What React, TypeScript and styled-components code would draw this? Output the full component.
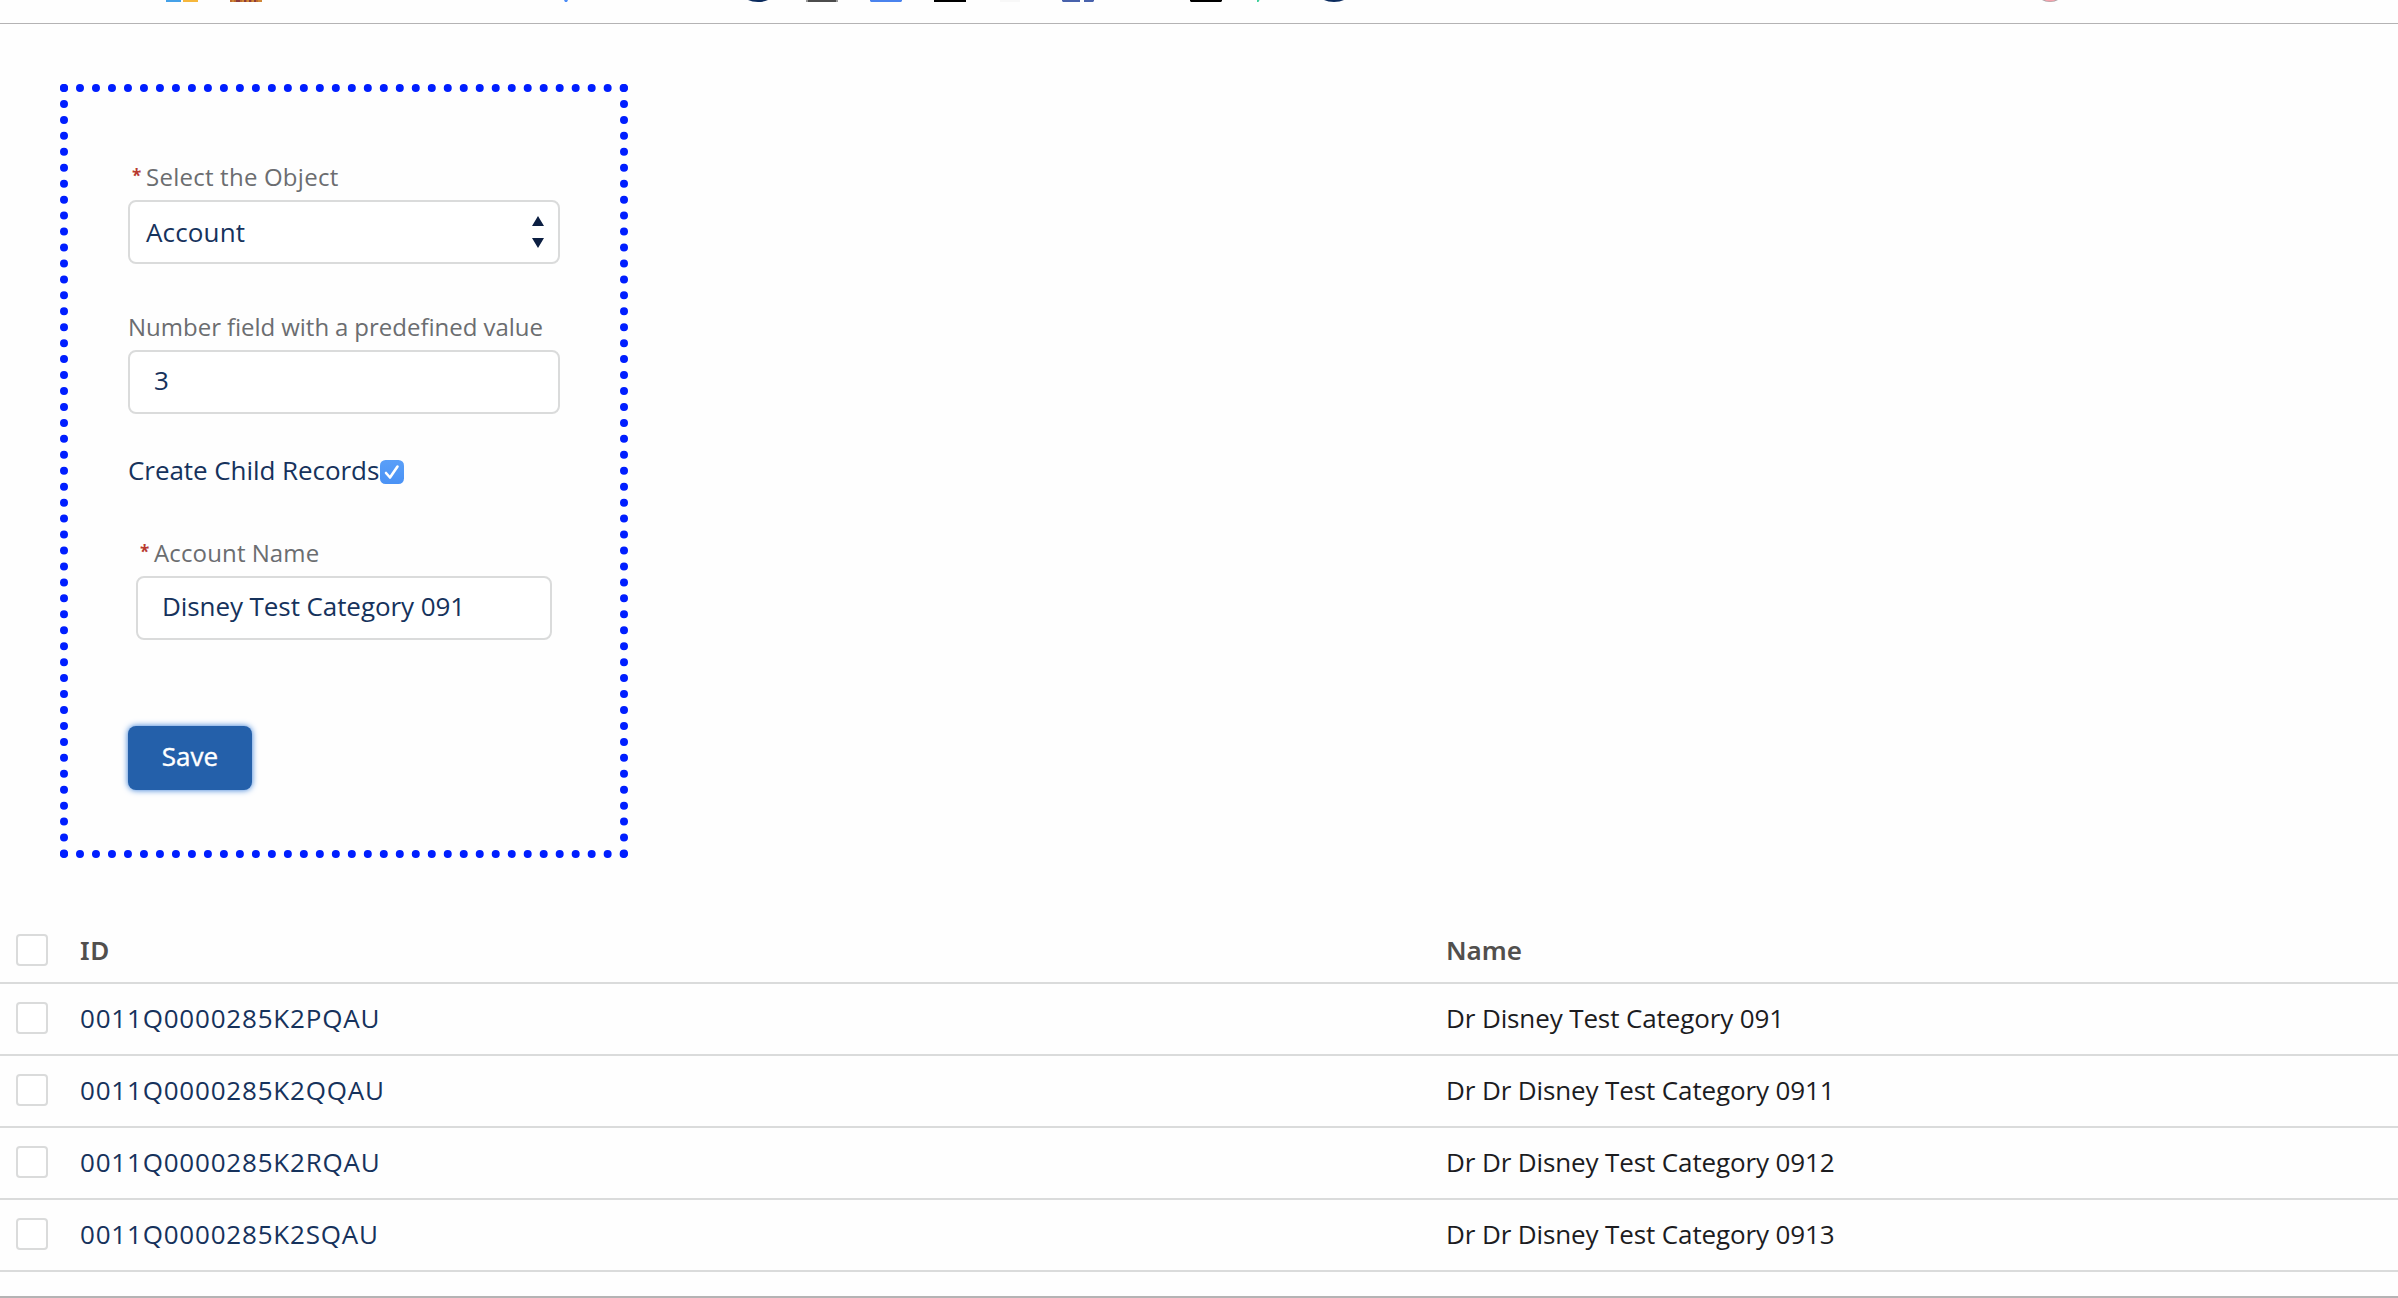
import React, { useState } from "react";
import styled, { createGlobalStyle } from "styled-components";

const GlobalStyle = createGlobalStyle`
  *, *::before, *::after { box-sizing: border-box; }
  html, body { margin: 0; background: #fefefe; }
  body {
    font-family: "Open Sans", "Noto Sans", sans-serif;
    font-size: 26px;
    line-height: 40px;
    color: #16325c;
    overflow: hidden;
  }
`;

const Page = styled.div`
  display: flex;
  flex-direction: column;
  width: 100%;
  height: 1298px;
`;

const BookmarksBar = styled.header`
  height: 24px;
  flex: none;
  border-bottom: 1px solid #b4b3b4;
`;

const Favicons = styled.svg`
  display: block;
`;

const FormCard = styled.section`
  display: flex;
  flex-direction: column;
  align-items: stretch;
  width: 568px;
  height: 774px;
  flex: none;
  margin: 60px 0 0 60px;
  padding: 67px 60px 60px;
  border: 8px dotted #001eff;
`;

const Field = styled.div<{ $top?: number; $inset?: number }>`
  display: flex;
  flex-direction: column;
  gap: 5px;
  margin: ${(p) => p.$top ?? 0}px ${(p) => p.$inset ?? 0}px 0;
`;

const Label = styled.label<{ $spacing?: number }>`
  display: flex;
  height: 36px;
  font-size: 24px;
  line-height: 36px;
  letter-spacing: ${(p) => p.$spacing ?? 0}px;
  word-spacing: -0.3px;
  color: #6b6d70;
  white-space: nowrap;
`;

const Required = styled.abbr`
  width: 18px;
  padding-left: 4px;
  font-size: 17px;
  font-weight: 700;
  line-height: 33px;
  letter-spacing: 0;
  color: #b83a30;
`;

const Control = styled.div`
  display: flex;
  align-items: center;
  height: 64px;
  border: 2px solid #dadbdb;
  border-radius: 8px;
  background: #fff;
`;

const SelectBox = styled(Control)`
  justify-content: space-between;
  padding: 0 14px 0 16px;
  letter-spacing: 0.15px;
`;

const Arrows = styled.svg`
  display: block;
`;

const TextInput = styled.input`
  width: 100%;
  height: 64px;
  padding: 0 24px 4px;
  border: 2px solid #dadbdb;
  border-radius: 8px;
  outline: none;
  background: #fff;
  color: #16325c;
  font: inherit;
  letter-spacing: -0.08px;
`;

const CheckRow = styled.label`
  display: flex;
  align-items: center;
  height: 40px;
  margin-top: 36px;
  letter-spacing: -0.06px;
`;

const BlueCheck = styled.svg`
  flex: none;
  margin: 4px 0 0 0.5px;
`;

const SaveButton = styled.button`
  align-self: flex-start;
  width: 124px;
  height: 64px;
  margin-top: 86px;
  padding: 0 0 4px;
  border: 0;
  border-radius: 8px;
  background: #2460aa;
  box-shadow: 0 0 6px #2f78d6;
  color: #fff;
  font: inherit;
  letter-spacing: 0;
  -webkit-text-stroke: 0.4px #fff;
`;

const Table = styled.div`
  display: flex;
  flex-direction: column;
  flex: none;
  height: 380px;
  margin-top: 60px;
  border-bottom: 2px solid #b4b3b4;
`;

const Row = styled.div<{ $head?: boolean }>`
  display: grid;
  grid-template-columns: 80px 1fr 952px;
  align-items: center;
  flex: none;
  height: ${(p) => (p.$head ? 64 : 72)}px;
  border-top: ${(p) => (p.$head ? 0 : 2)}px solid #dadbdb;
  padding-bottom: ${(p) => (p.$head ? 0 : 2)}px;

  &:last-child {
    height: 74px;
    border-bottom: 2px solid #dadbdb;
  }
`;

const CheckBox = styled.span`
  width: 32px;
  height: 32px;
  margin-left: 16px;
  border: 2px solid #dadbdb;
  border-radius: 4px;
  background: #fff;
`;

const HeadCell = styled.span<{ $spacing?: number }>`
  font-family: "Noto Sans", "Open Sans", sans-serif;
  font-weight: 600;
  letter-spacing: ${(p) => p.$spacing ?? 0}px;
  color: #514f4d;
`;

const IdCell = styled.span`
  letter-spacing: 0.8px;
`;

const NameCell = styled.span`
  letter-spacing: -0.12px;
  color: #1c1c1f;
`;

const records = [
  { id: "0011Q0000285K2PQAU", name: "Dr Disney Test Category 091" },
  { id: "0011Q0000285K2QQAU", name: "Dr Dr Disney Test Category 0911" },
  { id: "0011Q0000285K2RQAU", name: "Dr Dr Disney Test Category 0912" },
  { id: "0011Q0000285K2SQAU", name: "Dr Dr Disney Test Category 0913" },
];

/* Bottom edges of the bookmark icons that peek out above the page. */
function BookmarkIcons() {
  return (
    <Favicons width="2398" height="2" viewBox="0 0 2398 2" aria-hidden="true">
      <rect x="166" width="15" height="2" fill="#45a1e8" />
      <rect x="183" width="15" height="2" fill="#f6b73c" />
      <rect x="230" width="32" height="2" fill="#bd6a2d" />
      <path d="M236 0h4v2h-4zM244 0h2v2h-2zM249 0h2v2h-2zM254 0h2v2h-2z" fill="#8d3b3b" />
      <path d="M232 0h2v2h-2zM242 0h2v2h-2zM247 0h2v2h-2zM252 0h2v2h-2zM258 0h4v2h-4z" fill="#d08737" />
      <path d="M564 0h4l-1 2h-2z" fill="#4d8df6" />
      <path d="M748 0h20q-4 2-10 2t-10-2z" fill="#0b2b5e" />
      <rect x="806" width="32" height="2" fill="#999" />
      <rect x="808" width="28" height="2" fill="#4c4c4c" />
      <path d="M870 0h32v1l-1 1h-30l-1-1z" fill="#4a83ee" />
      <rect x="934" width="32" height="2" fill="#000" />
      <rect x="1000" width="20" height="2" fill="#f8f8f8" />
      <path d="M1062 0h18v2h-17l-1-1zM1084 0h10v1l-1 1h-9z" fill="#4862ac" />
      <path d="M1190 0h32v1l-1 1h-30l-1-1z" fill="#000" />
      <path d="M1257 0h2.500l-1 2h-1.500z" fill="#3fcf9a" />
      <path d="M1324 0h20q-4 2-10 2t-10-2z" fill="#0b2b5e" />
      <path d="M2042 0h16q-3 2-8 2t-8-2z" fill="#a8a0a4" />
      <path d="M2044 0h12q-2 1.400-6 1.400t-6-1.400z" fill="#f5a3ad" />
    </Favicons>
  );
}

export default function App() {
  const [count, setCount] = useState("3");
  const [accountName, setAccountName] = useState("Disney Test Category 091");

  return (
    <>
      <GlobalStyle />
      <Page>
        <BookmarksBar>
          <BookmarkIcons />
        </BookmarksBar>

        <FormCard>
          <Field>
            <Label $spacing={0.28}>
              <Required>*</Required>Select the Object
            </Label>
            <SelectBox>
              Account
              <Arrows width="12" height="32" viewBox="0 0 12 32">
                <path d="M6 0L12 10H0zM0 22H12L6 32z" fill="#0c1f42" />
              </Arrows>
            </SelectBox>
          </Field>

          <Field $top={45}>
            <Label>Number field with a predefined value</Label>
            <TextInput value={count} onChange={(e) => setCount(e.target.value)} />
          </Field>

          <CheckRow>
            Create Child Records
            <BlueCheck width="24" height="24" viewBox="0 0 24 24">
              <defs>
                <linearGradient id="tick" x1="0" y1="0" x2="0" y2="1">
                  <stop offset="0" stopColor="#5a9ff8" />
                  <stop offset="1" stopColor="#4a92f5" />
                </linearGradient>
              </defs>
              <rect width="24" height="24" rx="5.500" fill="url(#tick)" />
              <path
                d="M6 13l4 4.500L17.500 6.500"
                fill="none"
                stroke="#fff"
                strokeWidth="2.600"
                strokeLinecap="round"
                strokeLinejoin="round"
              />
            </BlueCheck>
          </CheckRow>

          <Field $top={45} $inset={8}>
            <Label $spacing={0.14}>
              <Required>*</Required>Account Name
            </Label>
            <TextInput value={accountName} onChange={(e) => setAccountName(e.target.value)} />
          </Field>

          <SaveButton>Save</SaveButton>
        </FormCard>

        <Table>
          <Row $head>
            <CheckBox />
            <HeadCell $spacing={0.6}>ID</HeadCell>
            <HeadCell>Name</HeadCell>
          </Row>
          {records.map((r) => (
            <Row key={r.id}>
              <CheckBox />
              <IdCell>{r.id}</IdCell>
              <NameCell>{r.name}</NameCell>
            </Row>
          ))}
        </Table>
      </Page>
    </>
  );
}
